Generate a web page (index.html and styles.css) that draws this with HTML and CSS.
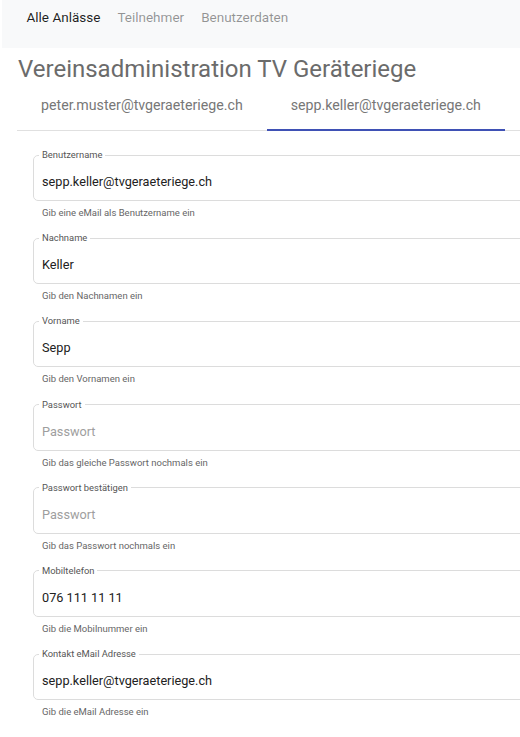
FILE: index.html
```html
<!DOCTYPE html>
<html lang="de">
<head>
<meta charset="utf-8">
<title>Vereinsadministration TV Geräteriege</title>
<link rel="stylesheet" href="styles.css">
</head>
<body>
<div class="page">
  <nav class="navbar">
    <a class="nav-link active" href="#">Alle Anlässe</a>
    <a class="nav-link" href="#">Teilnehmer</a>
    <a class="nav-link" href="#">Benutzerdaten</a>
  </nav>
  <main class="content">
    <h1 class="title">Vereinsadministration TV Geräteriege</h1>
    <div class="tabs">
      <div class="tab">peter.muster@tvgeraeteriege.ch</div>
      <div class="tab tab-active">sepp.keller@tvgeraeteriege.ch</div>
    </div>
    <form class="form">
      <div class="field">
        <fieldset class="box"><legend class="label">Benutzername</legend><div class="value">sepp.keller@tvgeraeteriege.ch</div></fieldset>
        <div class="hint">Gib eine eMail als Benutzername ein</div>
      </div>
      <div class="field">
        <fieldset class="box"><legend class="label">Nachname</legend><div class="value">Keller</div></fieldset>
        <div class="hint">Gib den Nachnamen ein</div>
      </div>
      <div class="field">
        <fieldset class="box"><legend class="label">Vorname</legend><div class="value">Sepp</div></fieldset>
        <div class="hint">Gib den Vornamen ein</div>
      </div>
      <div class="field">
        <fieldset class="box"><legend class="label">Passwort</legend><div class="value placeholder">Passwort</div></fieldset>
        <div class="hint">Gib das gleiche Passwort nochmals ein</div>
      </div>
      <div class="field">
        <fieldset class="box"><legend class="label">Passwort bestätigen</legend><div class="value placeholder">Passwort</div></fieldset>
        <div class="hint">Gib das Passwort nochmals ein</div>
      </div>
      <div class="field">
        <fieldset class="box"><legend class="label">Mobiltelefon</legend><div class="value">076 111 11 11</div></fieldset>
        <div class="hint">Gib die Mobilnummer ein</div>
      </div>
      <div class="field">
        <fieldset class="box"><legend class="label">Kontakt eMail Adresse</legend><div class="value">sepp.keller@tvgeraeteriege.ch</div></fieldset>
        <div class="hint">Gib die eMail Adresse ein</div>
      </div>
    </form>
  </main>
</div>
</body>
</html>
```

FILE: styles.css
```css
html, body {
  margin: 0;
  padding: 0;
  background: #fff;
  overflow: hidden;
}
body {
  font-family: Roboto, "Noto Sans", sans-serif;
  color: #212121;
}
.page {
  width: 520px;
  overflow: hidden;
}
.navbar {
  margin-left: 2px;
  height: 48px;
  background: #f8f9fa;
  display: flex;
  align-items: flex-start;
  padding: 7px 0 0 16px;
  box-sizing: border-box;
}
.nav-link {
  font-size: 13.5px;
  line-height: 20px;
  padding: 0 8.5px;
  color: rgba(0, 0, 0, 0.42);
  text-decoration: none;
}
.nav-link.active {
  color: rgba(0, 0, 0, 0.88);
}
.content {
  padding-left: 17px;
}
.title {
  margin: 0;
  padding: 5px 0 0 1px;
  font-size: 24px;
  line-height: 32px;
  font-weight: 400;
  color: #6b6b6b;
}
.tabs {
  display: flex;
  margin-top: 2px;
  width: 503px;
  border-bottom: 1px solid #e0e0e0;
}
.tab {
  height: 44px;
  padding: 0 24px 7px;
  display: flex;
  align-items: center;
  font-size: 14.2px;
  color: #777;
  box-sizing: border-box;
  border-bottom: 2px solid transparent;
  margin-bottom: -1px;
}
.tab-active {
  border-bottom-color: #3f51b5;
}
.form {
  padding: 19px 0 0 16px;
}
.field {
  width: 560px;
}
.box {
  margin: 0;
  border: 1px solid #dcdcdc;
  border-radius: 5px;
  padding: 0 0 0 5px;
  min-width: 0;
}
.label {
  padding: 0 3px;
  font-size: 9.4px;
  line-height: 10px;
  color: #555;
}
.value {
  padding: 12px 0 8px 3px;
  font-size: 12.7px;
  line-height: 20px;
  color: #212121;
}
.value.placeholder {
  color: #9e9e9e;
}
.hint {
  margin: 6px 0 14.2px;
  padding-left: 9px;
  font-size: 9.5px;
  line-height: 12px;
  color: #666;
}
```
